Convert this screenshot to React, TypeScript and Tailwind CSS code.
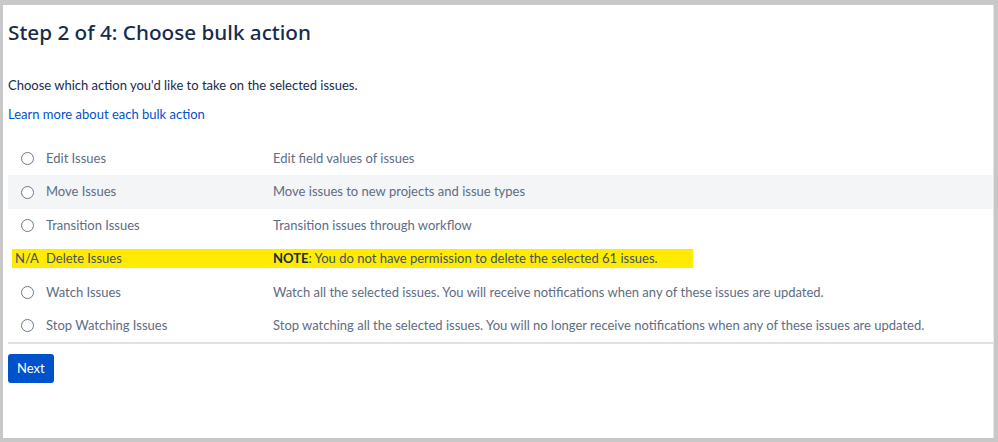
import React from "react";

// Bulk edit wizard — step 2, pick an action.

type Row = {
  label: string;
  desc: React.ReactNode;
  na?: boolean;
  shaded?: boolean;
};

const ROWS: Row[] = [
  { label: "Edit Issues", desc: "Edit field values of issues" },
  { label: "Move Issues", desc: "Move issues to new projects and issue types", shaded: true },
  { label: "Transition Issues", desc: "Transition issues through workflow" },
  {
    label: "Delete Issues",
    na: true,
    desc: (
      <>
        <b className="font-bold text-[#172b4d]">NOTE</b>: You do not have permission to delete the selected 61 issues.
      </>
    ),
  },
  {
    label: "Watch Issues",
    desc: "Watch all the selected issues. You will receive notifications when any of these issues are updated.",
  },
  {
    label: "Stop Watching Issues",
    desc: "Stop watching all the selected issues. You will no longer receive notifications when any of these issues are updated.",
  },
];

function Radio() {
  return <span className="block size-[13px] rounded-full border border-[#6b778c] bg-white" />;
}

function ActionRow({ row }: { row: Row }) {
  if (row.na) {
    return (
      <div className="flex h-[33.4px] items-center">
        <div className="ml-[4px] flex h-[19px] w-[681px] items-center bg-[#ffeb00]">
          <span className="w-[34px] pl-[3px] text-[#42526e]">N/A</span>
          <span className="w-[227px] text-[#42526e]">{row.label}</span>
          <span className="text-[#42526e]">{row.desc}</span>
        </div>
      </div>
    );
  }
  return (
    <div className={`flex h-[33.4px] items-center ${row.shaded ? "bg-[#f4f5f7]" : ""}`}>
      <span className="flex w-[38px] justify-center">
        <Radio />
      </span>
      <span className="w-[227px] text-[#5e6c84]">{row.label}</span>
      <span className="text-[#5e6c84]">{row.desc}</span>
    </div>
  );
}

export default function App() {
  return (
    <div
      className="h-[442px] w-[998px] bg-[#c8c8c8] pb-[4px] pl-[3px] pr-[4px] pt-[5px] text-[13px]"
      style={{ fontFamily: 'Lato, "Noto Sans", Arial, sans-serif' }}
    >
      <div className="h-full border-r border-[#e6e6e6] bg-white pl-[5px] text-[#172b4d]">
        <h1
          className="pt-[14px] text-[20.7px] font-medium leading-[26px] text-[#172b4d]"
          style={{ fontFamily: '"Noto Sans", "Open Sans", sans-serif' }}
        >
          Step 2 of 4: Choose bulk action
        </h1>
        <p className="mt-[31px] leading-[18px]">Choose which action you'd like to take on the selected issues.</p>
        <a className="mt-[11px] block leading-[18px] text-[#0052cc]" href="#">
          Learn more about each bulk action
        </a>
        <div className="mt-[19px] border-b-2 border-[#dfe1e6]">
          {ROWS.map((r) => (
            <ActionRow key={r.label} row={r} />
          ))}
        </div>
        <button className="mt-[10px] h-[29px] rounded-[3px] bg-[#0052cc] px-[9px] text-[13px] text-white">
          Next
        </button>
      </div>
    </div>
  );
}
